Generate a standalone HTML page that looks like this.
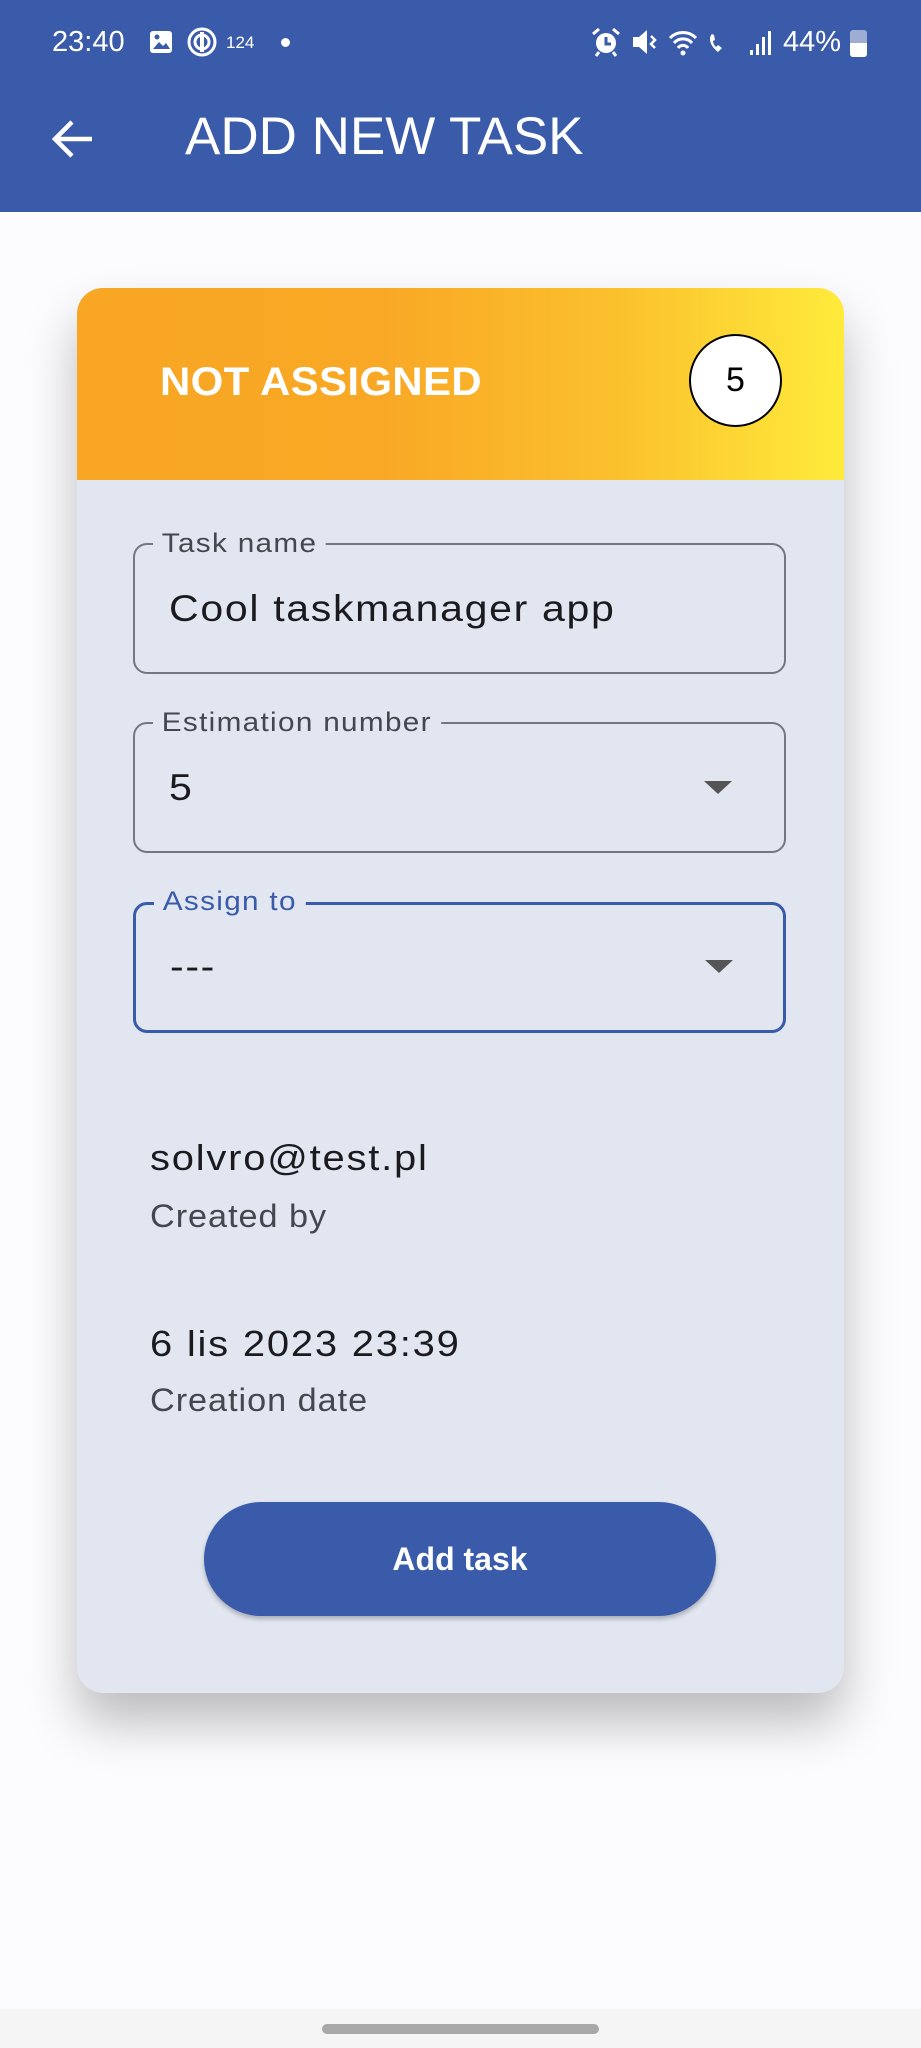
<!DOCTYPE html>
<html><head><meta charset="utf-8"><style>
*{margin:0;padding:0;box-sizing:border-box}
body{width:921px;height:2048px;background:#fcfbfe;font-family:"Liberation Sans",sans-serif;position:relative;overflow:hidden}
.appbar{position:absolute;left:0;top:0;width:921px;height:212px;background:#3a5ba9;color:#fff}
.st{position:absolute;top:26px;font-size:29px;color:#fff}
.title{position:absolute;left:185px;top:106px;font-size:53px;line-height:62px}
.card{position:absolute;left:77px;top:288px;width:767px;height:1405px;background:#e1e6f1;border-radius:26px;overflow:hidden;box-shadow:0 30px 50px rgba(0,0,0,.25)}
.head{position:absolute;left:0;top:0;width:100%;height:192px;background:linear-gradient(90deg,#f8a623 0%,#f9a825 40%,#fbc02d 70%,#ffeb3b 100%)}
.na{position:absolute;left:83px;top:72px;font-size:40px;font-weight:bold;color:#fff;letter-spacing:0.3px;transform:scaleX(1.05);transform-origin:left}
.circ{position:absolute;left:612px;top:46px;width:93px;height:93px;border:2.5px solid #000;border-radius:50%;background:#fff;font-size:34px;text-align:center;line-height:88px;color:#000}
.field{position:absolute;left:56px;width:653px;height:131px;border:2px solid #74777f;border-radius:14px}
.field.b{border:3.5px solid #3a5ba9}
.lab{position:absolute;left:18px;top:-20px;background:#e1e6f1;padding:0 8px;font-size:27px;color:#44474e;line-height:36px;letter-spacing:1.2px;transform:scaleX(1.1);transform-origin:left}
.b .lab{color:#3a5ba9;top:-22px}
.val{position:absolute;left:34px;top:44px;font-size:37px;color:#1b1b1f;line-height:40px;letter-spacing:1.5px;transform:scaleX(1.11);transform-origin:left}
.arr{position:absolute;right:52px;top:57px;width:0;height:0;border-left:14px solid transparent;border-right:14px solid transparent;border-top:13px solid #555}
.t1{position:absolute;left:73px;font-size:36px;color:#1b1b1f;letter-spacing:1.6px;transform:scaleX(1.11);transform-origin:left}
.t2{position:absolute;left:73px;font-size:32px;color:#44474e;letter-spacing:0.9px;transform:scaleX(1.07);transform-origin:left}
.btn{position:absolute;left:127px;top:1214px;width:512px;height:114px;border-radius:57px;background:#3a5ba9;color:#fff;font-size:32px;font-weight:bold;text-align:center;line-height:114px;box-shadow:0 3px 5px rgba(0,0,0,.25)}
.nav{position:absolute;left:0;top:2009px;width:921px;height:39px;background:#f5f5f5}
.handle{position:absolute;left:322px;top:2024px;width:277px;height:10px;border-radius:5px;background:#a8a8a8}
</style></head><body>
<div class="appbar">
<div class="st" style="left:52px">23:40</div>
<svg style="position:absolute;left:148px;top:29px" width="26" height="26" viewBox="0 0 26 26"><rect x="2" y="2" width="22" height="22" rx="3" fill="#fff"/><path d="M5 20l6-7 4 4 3-3 4 6z" fill="#3a5ba9"/><circle cx="9" cy="8" r="2.5" fill="#3a5ba9"/></svg>
<svg style="position:absolute;left:186px;top:26px" width="32" height="32" viewBox="0 0 32 32"><circle cx="16" cy="16" r="13" fill="none" stroke="#fff" stroke-width="3"/><circle cx="16" cy="16" r="7" fill="none" stroke="#fff" stroke-width="3"/><rect x="14" y="6" width="4" height="20" fill="#fff"/></svg>
<div class="st" style="left:226px;top:33px;font-size:17px">124</div>
<div style="position:absolute;left:281px;top:38px;width:9px;height:9px;border-radius:50%;background:#fff"></div>
<svg style="position:absolute;left:590px;top:26px" width="32" height="32" viewBox="0 0 32 32"><circle cx="16" cy="17" r="10" fill="#fff"/><path d="M16 11v7h5" stroke="#3a5ba9" stroke-width="3" fill="none"/><path d="M3 8l6-5M29 8l-6-5" stroke="#fff" stroke-width="3"/><path d="M9 26l-3 4M23 26l3 4" stroke="#fff" stroke-width="3"/></svg>
<svg style="position:absolute;left:630px;top:26px" width="32" height="32" viewBox="0 0 32 32"><path d="M3 11h6l8-7v24l-8-7H3z" fill="#fff"/><path d="M21 10l4 4-4 4 4 4" stroke="#fff" stroke-width="2.5" fill="none"/></svg>
<svg style="position:absolute;left:668px;top:28px" width="110" height="30" viewBox="0 0 110 30"><path d="M2 10a18 18 0 0 1 26 0M6 15a12 12 0 0 1 18 0M10 20a6 6 0 0 1 10 0" stroke="#fff" stroke-width="3" fill="none"/><circle cx="15" cy="25" r="2.5" fill="#fff"/><path d="M44 6c-4 4-2 12 6 18l4-4-4-3-2 2c-2-2-3-4-3-6l2-1-1-5z" fill="#fff"/><rect x="82" y="22" width="3" height="5" fill="#fff"/><rect x="88" y="16" width="3" height="11" fill="#fff"/><rect x="94" y="9" width="3" height="18" fill="#fff"/><rect x="100" y="3" width="3" height="24" fill="#fff"/></svg>
<div class="st" style="left:783px">44%</div>
<div style="position:absolute;left:850px;top:30px;width:17px;height:27px;border-radius:3px;background:rgba(255,255,255,.5)"></div>
<div style="position:absolute;left:850px;top:43px;width:17px;height:14px;border-radius:0 0 3px 3px;background:#fff"></div>
<svg style="position:absolute;left:50px;top:117px" width="44" height="44" viewBox="0 0 44 44"><path d="M42 22H6M22 5L5 22l17 17" stroke="#fff" stroke-width="4.5" fill="none"/></svg>
<div class="title">ADD NEW TASK</div>
</div>
<div class="card">
<div class="head"><div class="na">NOT ASSIGNED</div><div class="circ">5</div></div>
<div class="field" style="top:255px"><div class="lab">Task name</div><div class="val">Cool taskmanager app</div></div>
<div class="field" style="top:434px"><div class="lab">Estimation number</div><div class="val">5</div><div class="arr"></div></div>
<div class="field b" style="top:614px"><div class="lab">Assign to</div><div class="val" style="top:42px">---</div><div class="arr" style="right:50px;top:55px"></div></div>
<div class="t1" style="top:849px">solvro@test.pl</div>
<div class="t2" style="top:910px">Created by</div>
<div class="t1" style="top:1035px">6 lis 2023 23:39</div>
<div class="t2" style="top:1094px">Creation date</div>
<div class="btn">Add task</div>
</div>
<div class="nav"></div><div class="handle"></div>
</body></html>
